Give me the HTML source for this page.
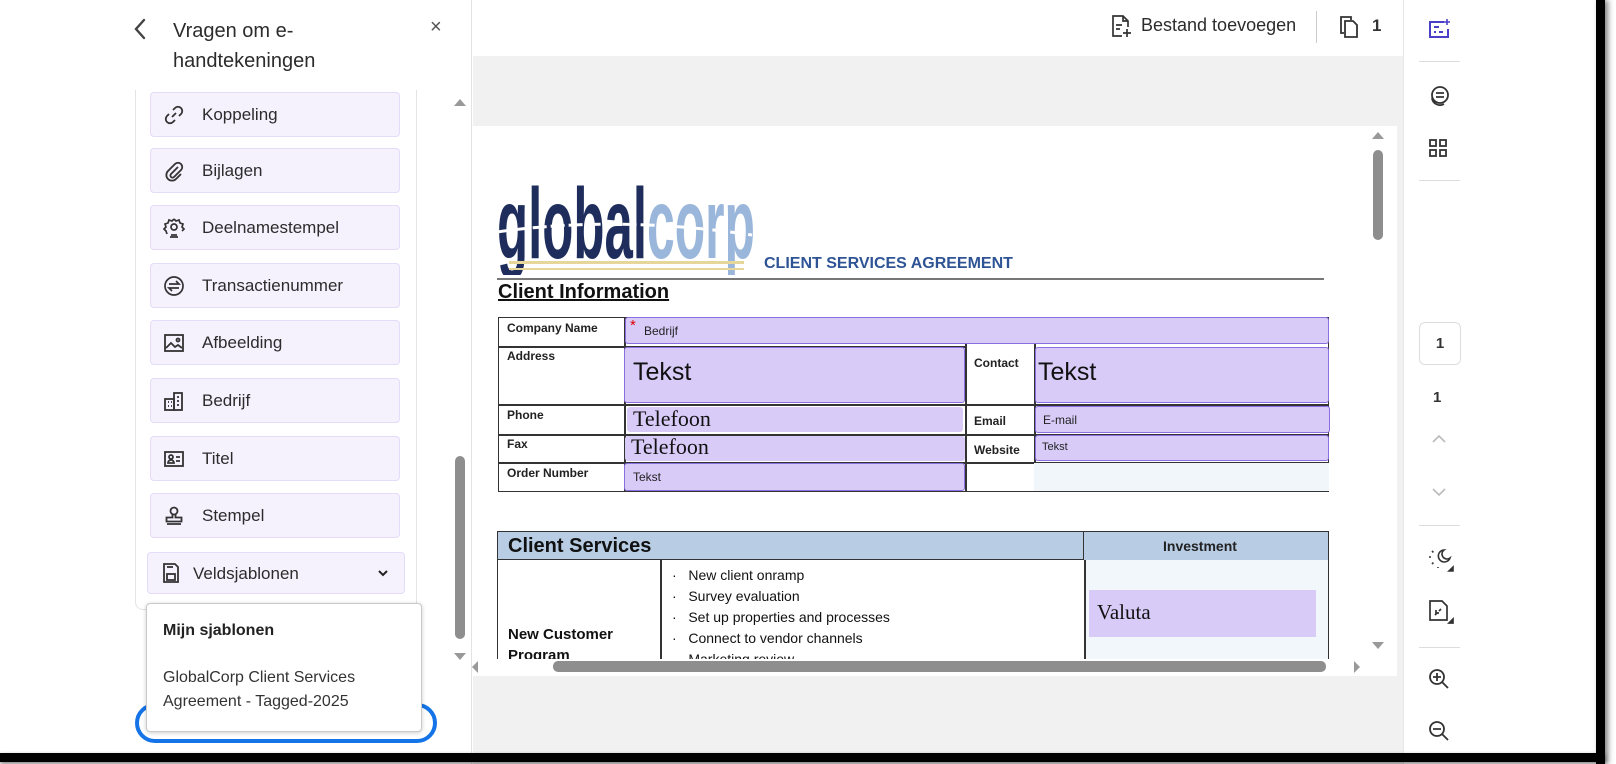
<!DOCTYPE html>
<html><head><meta charset="utf-8">
<style>
*{box-sizing:border-box;margin:0;padding:0}
body{width:1616px;height:764px;overflow:hidden;background:#fff;font-family:"Liberation Sans",sans-serif;position:relative;color:#222}
.abs{position:absolute}
.btn{position:absolute;left:150px;width:250px;height:45px;background:#f5f2fe;border:1.5px solid #e4dcf9;border-radius:4px;font-size:17px;color:#2c2c2c}
.btn span{position:absolute;left:51px;top:12px}
.btn svg{position:absolute;left:12px;top:11px}
.lbl{position:absolute;font-size:12px;font-weight:bold;color:#222}
.fld{position:absolute;background:#d8cbf8;border:1.5px solid #8b6fe0;border-radius:3px}
.ri{position:absolute;left:1427px}
</style></head><body>

<!-- left panel -->
<div class="abs" style="left:0;top:0;width:472px;height:764px;border-right:1px solid #e3e3e3;background:#fff"></div>
<svg class="abs" style="left:131px;top:17px" width="18" height="24" viewBox="0 0 18 24"><path d="M13 3 L5 12 L13 21" fill="none" stroke="#444" stroke-width="2.4" stroke-linecap="round"/></svg>
<div class="abs" style="left:173px;top:16px;font-size:20px;line-height:30px;color:#2c2c2c">Vragen om e-<br>handtekeningen</div>
<div class="abs" style="left:430px;top:16px;font-size:20px;color:#555">×</div>

<div class="abs" style="left:135px;top:90px;width:282px;height:520px;border-left:1px solid #e4e4e4;border-right:1px solid #e4e4e4;border-bottom:1px solid #e4e4e4;border-radius:0 0 8px 8px"></div>

<div class="btn" style="top:92px"><svg width="22" height="22" viewBox="0 0 22 22" fill="none" stroke="#333" stroke-width="1.8"><path d="M9 13 L13 9"/><path d="M10 6 l2-2 a4 4 0 0 1 6 6 l-2 2"/><path d="M12 16 l-2 2 a4 4 0 0 1 -6 -6 l2 -2"/></svg><span>Koppeling</span></div>
<div class="btn" style="top:148px"><svg width="22" height="22" viewBox="0 0 22 22" fill="none" stroke="#333" stroke-width="1.8"><path d="M15 7 L8 14 a2 2 0 0 0 3 3 L18 10 a4 4 0 0 0 -6 -6 L5 11 a5.5 5.5 0 0 0 8 8 l5-5"/></svg><span>Bijlagen</span></div>
<div class="btn" style="top:205px"><svg width="22" height="22" viewBox="0 0 22 22" fill="none" stroke="#333" stroke-width="1.7"><path d="M11 2 l2 2 3-1 1 3 3 1-1 3 2 2-2 2 M4 17 l-1-3 -2-2 2-2 -1-3 3-1 1-3 3 1 2-2"/><circle cx="11" cy="10" r="3"/><path d="M8 18h6 M7 20h8"/></svg><span>Deelnamestempel</span></div>
<div class="btn" style="top:263px"><svg width="22" height="22" viewBox="0 0 22 22" fill="none" stroke="#333" stroke-width="1.7"><circle cx="11" cy="11" r="9"/><path d="M6 9h10 l-3-3 M16 13H6 l3 3"/></svg><span>Transactienummer</span></div>
<div class="btn" style="top:320px"><svg width="22" height="22" viewBox="0 0 22 22" fill="none" stroke="#333" stroke-width="1.8"><rect x="2" y="3" width="18" height="16"/><path d="M3 16 l5-5 4 4 3-2 4 3"/><circle cx="15" cy="8" r="1.5"/></svg><span>Afbeelding</span></div>
<div class="btn" style="top:378px"><svg width="22" height="22" viewBox="0 0 22 22" fill="none" stroke="#333" stroke-width="1.8"><rect x="2" y="9" width="9" height="11"/><rect x="11" y="3" width="8" height="17"/><path d="M5 12h1M8 12h1M5 16h1M8 16h1M14 7h2M14 11h2M14 15h2"/></svg><span>Bedrijf</span></div>
<div class="btn" style="top:436px"><svg width="22" height="22" viewBox="0 0 22 22" fill="none" stroke="#333" stroke-width="1.8"><rect x="2" y="4" width="18" height="14"/><circle cx="8" cy="9" r="2"/><path d="M5 15 a3 3 0 0 1 6 0 z M13 9h4M13 13h4"/></svg><span>Titel</span></div>
<div class="btn" style="top:493px"><svg width="22" height="22" viewBox="0 0 22 22" fill="none" stroke="#333" stroke-width="1.8"><circle cx="11" cy="6" r="3.5"/><path d="M9.5 9.5v3h-6v4h15v-4h-6v-3 M4 19h14"/></svg><span>Stempel</span></div>
<div class="btn" style="top:552px;left:147px;width:258px;height:42px"><svg width="22" height="22" viewBox="0 0 22 22" fill="none" stroke="#333" stroke-width="1.8" style="top:9px;left:12px"><path d="M4 2h11l3 3v15H4z"/><rect x="7" y="12" width="8" height="6"/><path d="M7 5h6"/></svg><span style="left:45px;top:11px">Veldsjablonen</span><svg width="14" height="14" viewBox="0 0 14 14" style="left:228px;top:13px" fill="none" stroke="#222" stroke-width="2"><path d="M3 5l4 4 4-4"/></svg></div>

<!-- blue button behind -->
<div class="abs" style="left:135px;top:703px;width:302px;height:40px;border:4px solid #1473e6;border-radius:20px;background:#fff"></div>
<!-- popup -->
<div class="abs" style="left:146px;top:603px;width:276px;height:129px;background:#fff;border:1px solid #c9c9c9;border-radius:4px;box-shadow:0 1px 4px rgba(0,0,0,.2)"></div>
<div class="abs" style="left:163px;top:622px;font-size:16px;font-weight:bold;color:#222">Mijn sjablonen</div>
<div class="abs" style="left:163px;top:666px;font-size:16px;line-height:24px;color:#333">GlobalCorp Client Services<br>Agreement - Tagged-2025</div>

<!-- left scrollbar -->
<svg class="abs" style="left:453px;top:97px" width="14" height="10"><path d="M1 9 L7 2 L13 9z" fill="#999"/></svg>
<div class="abs" style="left:455px;top:456px;width:10px;height:183px;background:#8e8e8e;border-radius:5px"></div>
<svg class="abs" style="left:453px;top:652px" width="14" height="10"><path d="M1 1 L7 8 L13 1z" fill="#999"/></svg>

<!-- top bar -->
<svg class="abs" style="left:1110px;top:14px" width="24" height="26" viewBox="0 0 24 26" fill="none" stroke="#333" stroke-width="1.7"><path d="M12 22H3V2h10l5 5v6 M13 2v5h5 M6 11h6M6 15h4 M17 15v8 M13 19h8"/></svg>
<div class="abs" style="left:1141px;top:15px;font-size:18px;color:#2c2c2c">Bestand toevoegen</div>
<div class="abs" style="left:1316px;top:11px;width:1px;height:32px;background:#ccc"></div>
<svg class="abs" style="left:1338px;top:14px" width="24" height="26" viewBox="0 0 24 26" fill="none" stroke="#333" stroke-width="1.8"><path d="M6 19H3V3h10v3 M7 7h8l4 4v12H7z"/></svg>
<div class="abs" style="left:1372px;top:16px;font-size:17px;font-weight:bold;color:#333">1</div>

<!-- gray area -->
<div class="abs" style="left:473px;top:56px;width:930px;height:708px;background:#f1f1f1"></div>
<div class="abs" style="left:472px;top:126px;width:925px;height:550px;background:#fff"></div>

<!-- doc -->
<svg class="abs" style="left:497px;top:180px" width="265" height="95" viewBox="0 0 265 95">
<text x="0" y="78" font-family="Liberation Sans Narrow, Liberation Sans, sans-serif" font-weight="bold" font-size="100" fill="#1e2d5c" textLength="150" lengthAdjust="spacingAndGlyphs">global</text>
<text x="150" y="78" font-family="Liberation Sans Narrow, Liberation Sans, sans-serif" font-weight="bold" font-size="100" fill="#9ab7db" textLength="108" lengthAdjust="spacingAndGlyphs">corp</text>
<path d="M0 52 Q120 35 255 55" stroke="#fff" stroke-width="3" fill="none" stroke-dasharray="14 4"/>
<rect x="12" y="81" width="235" height="3" fill="#e6d69a"/><rect x="12" y="88" width="235" height="2" fill="#e6d69a"/>
</svg>
<div class="abs" style="left:764px;top:255px;font-size:16px;font-weight:bold;color:#2f5496">CLIENT SERVICES AGREEMENT</div>
<div class="abs" style="left:497px;top:278px;width:827px;height:2px;background:#777"></div>
<div class="abs" style="left:498px;top:281px;font-size:20px;font-weight:bold;text-decoration:underline;color:#111">Client Information</div>

<!-- client info table -->
<div class="abs" style="left:498px;top:317px;width:831px;height:175px;border:1.5px solid #333"></div>
<div class="abs" style="left:498px;top:346px;width:467px;height:1.5px;background:#333"></div>
<div class="abs" style="left:498px;top:404px;width:831px;height:1.5px;background:#333"></div>
<div class="abs" style="left:498px;top:434px;width:831px;height:1.5px;background:#333"></div>
<div class="abs" style="left:498px;top:462px;width:831px;height:1.5px;background:#333"></div>
<div class="abs" style="left:624px;top:317px;width:1.5px;height:175px;background:#333"></div>
<div class="abs" style="left:965px;top:344px;width:1.5px;height:148px;background:#333"></div>
<div class="abs" style="left:1034px;top:344px;width:1.5px;height:148px;background:#333"></div>
<div class="abs" style="left:1034px;top:463px;width:295px;height:28px;background:#f1f6fb"></div>

<div class="lbl" style="left:507px;top:321px">Company Name</div>
<div class="lbl" style="left:507px;top:349px">Address</div>
<div class="lbl" style="left:507px;top:408px">Phone</div>
<div class="lbl" style="left:507px;top:437px">Fax</div>
<div class="lbl" style="left:507px;top:466px">Order Number</div>
<div class="lbl" style="left:974px;top:356px">Contact</div>
<div class="lbl" style="left:974px;top:414px">Email</div>
<div class="lbl" style="left:974px;top:443px">Website</div>

<div class="fld" style="left:625px;top:317px;width:704px;height:27px"></div>
<div class="abs" style="left:630px;top:317px;color:#d00;font-size:15px">*</div>
<div class="abs" style="left:644px;top:324px;font-size:12px">Bedrijf</div>
<div class="fld" style="left:624px;top:347px;width:341px;height:56px"></div>
<div class="abs" style="left:633px;top:358px;font-size:25px;color:#111">Tekst</div>
<div class="fld" style="left:1035px;top:347px;width:294px;height:56px"></div>
<div class="abs" style="left:1038px;top:358px;font-size:25px;color:#111">Tekst</div>
<div class="fld" style="left:627px;top:407px;width:336px;height:25px;border-color:#d8cbf8"></div>
<div class="abs" style="left:633px;top:406px;font-family:'Liberation Serif',serif;font-size:22px;color:#111">Telefoon</div>
<div class="fld" style="left:1035px;top:406px;width:295px;height:27px"></div>
<div class="abs" style="left:1043px;top:413px;font-size:12px">E-mail</div>
<div class="fld" style="left:625px;top:436px;width:340px;height:25px;border-color:#d8cbf8"></div>
<div class="abs" style="left:631px;top:434px;font-family:'Liberation Serif',serif;font-size:22px;color:#111">Telefoon</div>
<div class="fld" style="left:1035px;top:435px;width:294px;height:26px"></div>
<div class="abs" style="left:1042px;top:441px;font-size:11px">Tekst</div>
<div class="fld" style="left:624px;top:463px;width:341px;height:28px"></div>
<div class="abs" style="left:633px;top:470px;font-size:12px">Tekst</div>

<!-- client services table -->
<div class="abs" style="left:497px;top:531px;width:832px;height:128px;border:1.5px solid #333;border-bottom:none;overflow:hidden">
  <div class="abs" style="left:0;top:0;width:586px;height:28px;background:#b8cce4;border-bottom:1.5px solid #333;border-right:1.5px solid #333"></div>
  <div class="abs" style="left:586px;top:0;width:246px;height:28px;background:#b8cce4"></div>
  <div class="abs" style="left:586px;top:28px;width:246px;height:100px;background:#f2f7fc"></div>
  <div class="abs" style="left:586px;top:28px;width:1.5px;height:100px;background:#333"></div>
  <div class="abs" style="left:162px;top:28px;width:1.5px;height:100px;background:#333"></div>
  <div class="abs" style="left:10px;top:3px;font-size:20px;font-weight:bold;color:#111">Client Services</div>
  <div class="abs" style="left:665px;top:6px;font-size:14px;font-weight:bold;color:#222">Investment</div>
  <div class="abs" style="left:10px;top:92px;font-size:15px;font-weight:bold;line-height:21px;color:#111">New Customer<br>Program</div>
  <div class="abs" style="left:174px;top:33px;font-size:14px;line-height:21px;color:#111">·&nbsp;&nbsp; New client onramp<br>·&nbsp;&nbsp; Survey evaluation<br>·&nbsp;&nbsp; Set up properties and processes<br>·&nbsp;&nbsp; Connect to vendor channels<br>·&nbsp;&nbsp; Marketing review</div>
  <div class="abs" style="left:591px;top:58px;width:227px;height:47px;background:#d8cbf8"></div>
  <div class="abs" style="left:599px;top:68px;font-family:'Liberation Serif',serif;font-size:21px;color:#111">Valuta</div>
</div>
<div class="abs" style="left:472px;top:659px;width:925px;height:17px;background:#fff"></div>
<!-- doc scrollbars -->
<svg class="abs" style="left:1371px;top:130px" width="14" height="10"><path d="M1 9 L7 2 L13 9z" fill="#999"/></svg>
<div class="abs" style="left:1373px;top:150px;width:10px;height:90px;background:#8e8e8e;border-radius:5px"></div>
<svg class="abs" style="left:1371px;top:641px" width="14" height="10"><path d="M1 1 L7 8 L13 1z" fill="#999"/></svg>
<div class="abs" style="left:553px;top:661px;width:773px;height:11px;background:#8e8e8e;border-radius:5px"></div>
<svg class="abs" style="left:470px;top:660px" width="10" height="14"><path d="M8 1 L2 7 L8 13z" fill="#999"/></svg>
<svg class="abs" style="left:1352px;top:660px" width="10" height="14"><path d="M2 1 L8 7 L2 13z" fill="#999"/></svg>

<!-- right rail -->
<div class="abs" style="left:1403px;top:0;width:1px;height:764px;background:#e6e6e6"></div>
<svg class="ri" style="top:17px" width="26" height="24" viewBox="0 0 26 24" fill="none" stroke="#4b3fc8" stroke-width="2"><path d="M17 5H3v15h18v-8"/><path d="M7 10h5M7 15h2M12 15h4"/><path d="M20 2v6M17 5h6" stroke-width="1.6"/></svg>
<div class="abs" style="left:1419px;top:61px;width:41px;height:1px;background:#ddd"></div>
<svg class="ri" style="top:84px" width="24" height="24" viewBox="0 0 24 24" fill="none" stroke="#333" stroke-width="1.8"><circle cx="13" cy="11" r="8"/><path d="M9 9h8M9 13h8 M5 14 a8 8 0 0 0 12 6"/></svg>
<svg class="ri" style="top:137px" width="22" height="22" viewBox="0 0 22 22" fill="none" stroke="#333" stroke-width="1.8"><rect x="3" y="3" width="6" height="6"/><rect x="13" y="3" width="6" height="6"/><rect x="3" y="13" width="6" height="6"/><rect x="13" y="13" width="6" height="6"/></svg>
<div class="abs" style="left:1419px;top:180px;width:41px;height:1px;background:#ddd"></div>
<div class="abs" style="left:1419px;top:322px;width:42px;height:43px;border:1px solid #ddd;border-radius:6px;font-size:15px;font-weight:bold;text-align:center;line-height:41px;color:#333">1</div>
<div class="abs" style="left:1433px;top:389px;font-size:15px;font-weight:bold;color:#333">1</div>
<svg class="abs" style="left:1431px;top:433px" width="16" height="12"><path d="M2 9 L8 3 L14 9" fill="none" stroke="#bbb" stroke-width="1.6"/></svg>
<svg class="abs" style="left:1431px;top:486px" width="16" height="12"><path d="M2 3 L8 9 L14 3" fill="none" stroke="#bbb" stroke-width="1.6"/></svg>
<div class="abs" style="left:1419px;top:525px;width:41px;height:1px;background:#ddd"></div>
<svg class="ri" style="top:546px" width="30" height="28" viewBox="0 0 30 28" fill="none" stroke="#333" stroke-width="1.6"><path d="M17 4 a6 6 0 1 0 6 8 a5 5 0 0 1 -6 -8z"/><path d="M2 11h2M5 5l1.5 1.5M5 18l1.5-1.5M11 21v1" stroke-dasharray="2 2"/><path d="M26 25l0-4-4 4z" fill="#333"/></svg>
<svg class="ri" style="top:598px" width="30" height="28" viewBox="0 0 30 28" fill="none" stroke="#333" stroke-width="1.7"><path d="M3 3h12l5 5v14H3z"/><path d="M8 17 l2-2 M14 11 l-2 2 M9 12v3h3"/><path d="M26 25l0-4-4 4z" fill="#333"/></svg>
<div class="abs" style="left:1419px;top:647px;width:41px;height:1px;background:#ddd"></div>
<svg class="ri" style="top:667px" width="24" height="24" viewBox="0 0 24 24" fill="none" stroke="#333" stroke-width="1.8"><circle cx="10" cy="10" r="7"/><path d="M15 15l6 6 M10 6v8M6 10h8"/></svg>
<svg class="ri" style="top:719px" width="24" height="24" viewBox="0 0 24 24" fill="none" stroke="#333" stroke-width="1.8"><circle cx="10" cy="10" r="7"/><path d="M15 15l6 6 M6 10h8"/></svg>

<!-- outer black frame -->
<div class="abs" style="left:1596px;top:0;width:9px;height:764px;background:#000;box-shadow:3px 0 6px rgba(0,0,0,.5)"></div>
<div class="abs" style="left:0;top:753px;width:1605px;height:9px;background:#000;box-shadow:0 2px 4px rgba(0,0,0,.5)"></div>
</body></html>
